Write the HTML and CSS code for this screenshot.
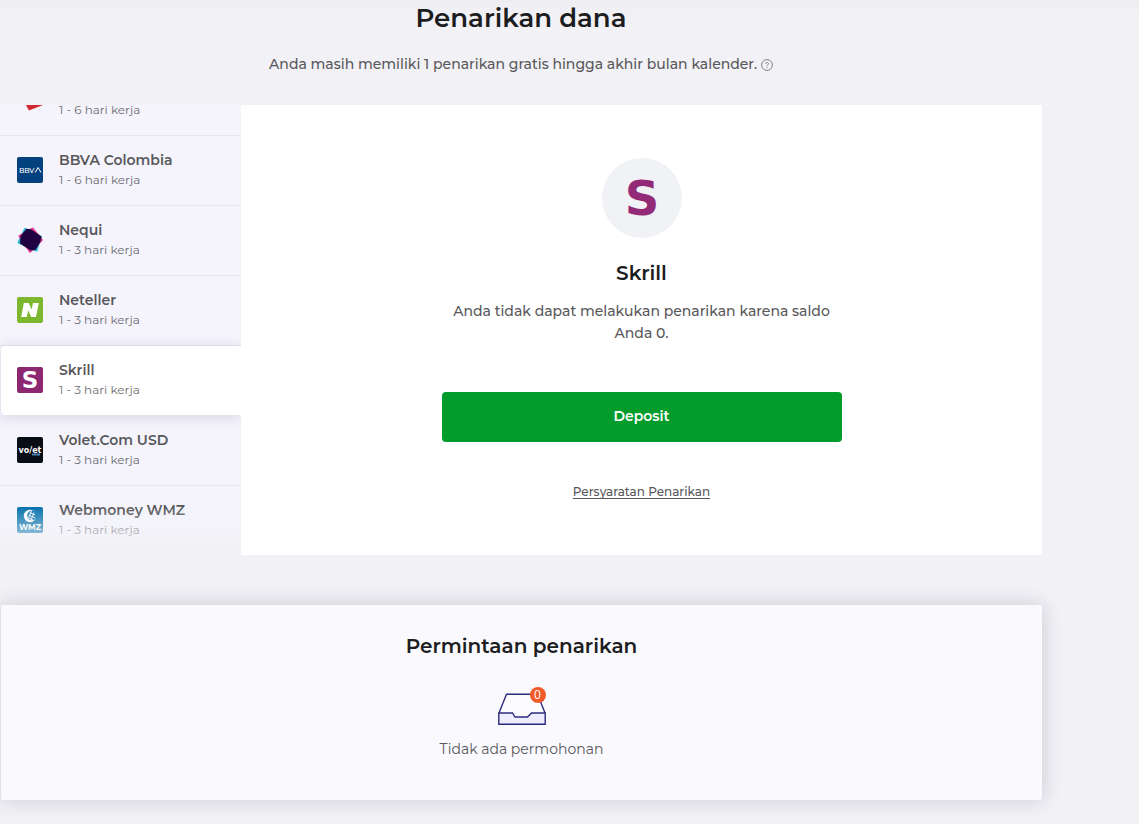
FILE: index.html
```html
<!DOCTYPE html>
<html lang="id">
<head>
<meta charset="utf-8">
<meta name="viewport" content="width=device-width, initial-scale=1">
<title>Penarikan dana</title>
<link rel="stylesheet" href="styles.css">
</head>
<body>
<main class="page">
  <header class="intro">
    <h1 class="title">Penarikan dana</h1>
    <p class="lead">Anda masih memiliki 1 penarikan gratis hingga akhir bulan kalender.
      <button class="help" type="button" aria-label="Info">
        <svg width="12" height="12" viewBox="0 0 12 12" fill="none" stroke="#77777c"><circle cx="6" cy="6" r="5.4" stroke-width=".9"/><path d="M4.5 4.9C4.5 3 7.5 3 7.5 4.8C7.5 5.9 6 5.8 6 7.1M6 8v1" stroke-width=".9"/></svg>
      </button>
    </p>
  </header>

  <section class="withdraw">
    <nav class="methods">
      <button class="method method-cut" type="button">
        <svg class="logo" width="26" height="26" viewBox="0 0 26 26"><path d="M9 0H26L12 5.500z" fill="#d3262c"/></svg>
        <span class="method-text"><span class="method-time">1 - 6 hari kerja</span></span>
      </button>
      <button class="method" type="button">
        <svg class="logo" width="26" height="26" viewBox="0 0 26 26"><rect width="26" height="26" rx="2" fill="#04427f"/><text class="mark-bbva" x="2" y="15.500">BBV</text><path d="M18.200 15.500L21.100 10.500L24 15.500" fill="none" stroke="#fff" stroke-width="1"/></svg>
        <span class="method-text"><span class="method-name">BBVA Colombia</span><span class="method-time">1 - 6 hari kerja</span></span>
      </button>
      <button class="method" type="button">
        <svg class="logo" width="26" height="26" viewBox="0 0 26 26" stroke-linejoin="round" stroke-width="2"><path d="M8 2L1.500 15.500L19.500 23.500L24 10z" fill="#2fb9d6" stroke="#2fb9d6"/><path d="M15.500 1.500L2.500 9L13 24.800L24.800 13z" fill="#e23a8c" stroke="#e23a8c"/><path d="M9.500 1.800L14 2.200L24.500 9.500L23.500 14.500L18.500 23L13.500 23.500L3 16.500L3.500 9z" fill="#200243"/></svg>
        <span class="method-text"><span class="method-name">Nequi</span><span class="method-time">1 - 3 hari kerja</span></span>
      </button>
      <button class="method" type="button">
        <svg class="logo" width="26" height="26" viewBox="0 0 26 26"><rect width="26" height="26" rx="2" fill="#7db72f"/><path d="M4.200 20L6.800 6H11.800L14.600 12.500L16 6H21.800L19 20H14.200L11.200 13.300L9.800 20z" fill="#fff"/></svg>
        <span class="method-text"><span class="method-name">Neteller</span><span class="method-time">1 - 3 hari kerja</span></span>
      </button>
      <button class="method method-active" type="button" aria-current="true">
        <svg class="logo" width="26" height="26" viewBox="0 0 26 26"><rect width="26" height="26" rx="2" fill="#8d276f"/><text class="mark-s" x="13" y="21" text-anchor="middle">S</text></svg>
        <span class="method-text"><span class="method-name">Skrill</span><span class="method-time">1 - 3 hari kerja</span></span>
      </button>
      <button class="method" type="button">
        <svg class="logo" width="26" height="26" viewBox="0 0 26 26"><rect width="26" height="26" rx="2" fill="#090d15"/><text class="mark-volet" x="13" y="15.500" text-anchor="middle">vo/et</text><rect x="15" y="16.500" width="8" height="2" fill="#4c83b8"/></svg>
        <span class="method-text"><span class="method-name">Volet.Com USD</span><span class="method-time">1 - 3 hari kerja</span></span>
      </button>
      <button class="method" type="button">
        <svg class="logo" width="26" height="26" viewBox="0 0 26 26"><rect width="26" height="26" rx="2" fill="#0873ad"/><circle cx="13" cy="9" r="6.200" fill="#fff"/><circle cx="15" cy="8.500" r="4.800" fill="#0873ad"/><path d="M12.500 5.500l5.500 2.500M11.500 8l6.500 3M12 11l4 2M14.500 4l-3 7M17 5.500l-3 7.500" stroke="#fff" stroke-width=".9"/><text class="mark-wmz" x="13" y="23" text-anchor="middle">WMZ</text></svg>
        <span class="method-text"><span class="method-name">Webmoney WMZ</span><span class="method-time">1 - 3 hari kerja</span></span>
      </button>
    </nav>

    <div class="panel">
      <svg class="badge" width="80" height="80" viewBox="0 0 80 80"><circle cx="40" cy="40" r="40" fill="#f1f2f6"/><text class="mark-s mark-s-large" x="40" y="57" text-anchor="middle">S</text></svg>
      <h2 class="heading">Skrill</h2>
      <p class="message">Anda tidak dapat melakukan penarikan karena saldo Anda 0.</p>
      <button class="deposit" type="button">Deposit</button>
      <a class="terms" href="#">Persyaratan Penarikan</a>
    </div>
  </section>

  <section class="requests">
    <h2 class="heading">Permintaan penarikan</h2>
    <div class="tray">
      <svg width="48" height="32" viewBox="0 0 48 32" stroke="#2d2b7d" stroke-width="1.400"><path d="M1 20L8.500 1.200H39.500L47 20" fill="#fcfcff"/><path d="M.800 20H14.500L17 24H29.500L33.500 20H47.200V31.200H.800z" fill="#eeedfd"/></svg>
      <span class="count">0</span>
    </div>
    <p class="empty">Tidak ada permohonan</p>
  </section>
</main>
</body>
</html>
```
FILE: styles.css
```css
* { box-sizing: border-box; }

body {
  margin: 0;
  background: linear-gradient(#eeeef2, #f2f1f6 16px);
  background-color: #f2f1f6;
  background-repeat: no-repeat;
  color: #58585b;
  font-family: Montserrat, Inter, sans-serif;
  font-size: 14px;
  font-weight: 500;
}

h1, h2, p { margin: 0; }
button { font: inherit; color: inherit; border: 0; cursor: pointer; }

.page { padding: 0 97px 24px 0; }

.intro { height: 105px; text-align: center; }
.title { color: #1c1d20; font-size: 26px; font-weight: 600; line-height: 36px; }
.lead { margin-top: 17px; line-height: 22px; }
.help { display: inline-flex; padding: 0; background: none; vertical-align: -2px; }

.withdraw { display: flex; }

.methods {
  position: relative;
  display: flex;
  flex-direction: column;
  flex: 0 0 241px;
  background: #f5f4fd;
}
.methods::after {
  content: "";
  position: absolute;
  inset: auto 0 0;
  height: 48px;
  background: linear-gradient(#f1f2f500, #f1f2f5);
  pointer-events: none;
}
.method {
  display: flex;
  align-items: center;
  gap: 16px;
  height: 70px;
  padding: 0 17px 1px;
  background: none;
  border-bottom: 1px solid #e8e6f0;
  text-align: left;
}
.method:last-child { height: 69px; border: 0; }
.method-cut { align-items: flex-start; height: 31px; }
.method-cut .method-time { line-height: 10px; }
.method-active {
  position: relative;
  height: 69px;
  margin: 0 0 1px 1px;
  padding-left: 16px;
  border: 0;
  border-radius: 4px 0 0 4px;
  background: #fff;
  box-shadow: 0 2px 14px #1b1a3326;
  clip-path: inset(-16px 0 -16px -1px);
}
.logo { flex: none; }
.method-text { display: flex; flex-direction: column; }
.method-name { font-weight: 600; line-height: 20px; }
.method-time { font-size: 12px; font-weight: 400; line-height: 20px; color: #6c6c70; }

.mark-bbva { fill: #fff; font: 500 7px Montserrat, Inter, sans-serif; }
.mark-s { fill: #fff; font: bold 23px "DejaVu Sans", sans-serif; }
.mark-s-large { fill: #932a78; font-size: 48px; }
.mark-volet { fill: #fff; font: bold 8px "DejaVu Sans", sans-serif; }
.mark-wmz { fill: #fff; font: bold 8px Montserrat, Inter, sans-serif; }

.panel {
  display: flex;
  flex: 1;
  flex-direction: column;
  align-items: center;
  padding: 53px 24px 48px;
  background: #fff;
  text-align: center;
}
.heading { color: #1c1d20; font-size: 20px; font-weight: 600; line-height: 28px; }
.panel .heading { margin-top: 21px; }
.message { max-width: 400px; margin-top: 13px; line-height: 22px; }
.deposit {
  width: 100%;
  max-width: 400px;
  height: 50px;
  margin-top: 48px;
  padding: 0 0 2px;
  border-radius: 4px;
  background: #029c2d;
  color: #fff;
  font-weight: 600;
}
.terms { margin-top: 40px; color: inherit; font-size: 12px; line-height: 20px; text-underline-offset: 2px; }

.requests {
  display: flex;
  flex-direction: column;
  align-items: center;
  margin: 50px 0 0 1px;
  padding: 27px 24px 40px;
  border-radius: 2px;
  background: #f9f9fe;
  box-shadow: 0 0 20px #1b1a332e;
}
.tray { position: relative; display: flex; margin-top: 33px; }
.count {
  position: absolute;
  top: -6px;
  right: 0;
  width: 16px;
  border-radius: 8px;
  background: #f15a29;
  color: #fff;
  font: 12px/16px "Open Sans", sans-serif;
  text-align: center;
}
.empty { margin-top: 13px; font-weight: 400; line-height: 22px; }
```
